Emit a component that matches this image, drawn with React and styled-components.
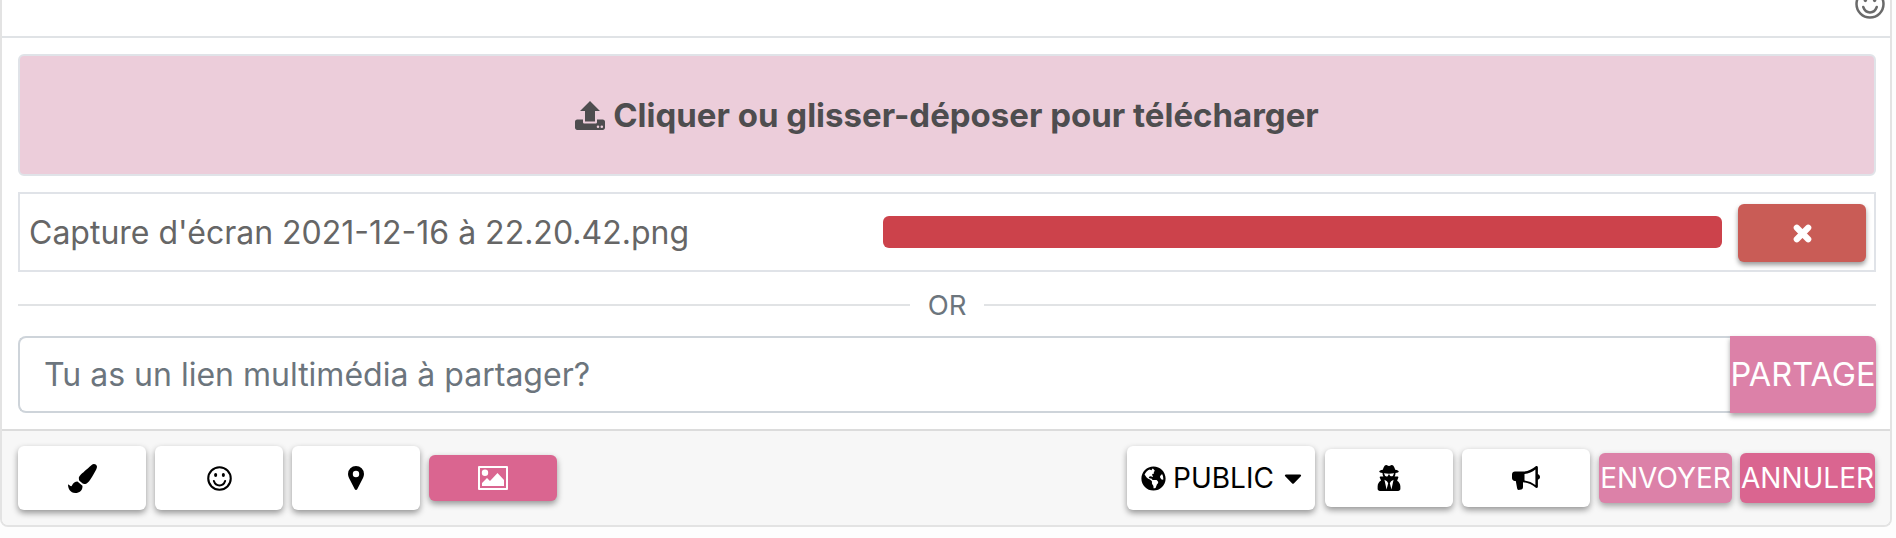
import React from "react";
import styled, { createGlobalStyle } from "styled-components";
import { FaPaintBrush, FaGlobeAmericas, FaCaretDown, FaUserSecret } from "react-icons/fa";

const Global = createGlobalStyle`
  html, body { margin: 0; padding: 0; background: #fdfdfd; }
  body { font-family: Inter, "Noto Sans", sans-serif; overflow: hidden; }
  * { box-sizing: border-box; }
`;

const SmileIcon = ({ size = 25 }) => (
  <svg width={size} height={size} viewBox="0 0 24 24" fill="none" stroke="currentColor" strokeWidth="2">
    <circle cx="12" cy="12" r="10.8" />
    <path d="M6.6 14.4c1 2.9 3 4.3 5.4 4.3s4.400-1.400 5.400-4.300" strokeLinecap="round" />
    <ellipse cx="8.300" cy="8.600" rx="1.500" ry="1.900" fill="currentColor" stroke="none" />
    <ellipse cx="15.700" cy="8.600" rx="1.500" ry="1.900" fill="currentColor" stroke="none" />
  </svg>
);

const PinIcon = () => (
  <svg width="16" height="24" viewBox="0 0 16 24">
    <path
      fillRule="evenodd"
      fill="currentColor"
      d="M8 0a8 8 0 0 1 8 8c0 1.500-.4 2.600-1 3.900L9.200 23.200a1.300 1.300 0 0 1-2.400 0L1 11.900C.4 10.600 0 9.500 0 8a8 8 0 0 1 8-8zm0 4.800a3.200 3.200 0 1 0 0 6.400 3.200 3.200 0 0 0 0-6.400z"
    />
  </svg>
);

const PictureIcon = () => (
  <svg width="30" height="24" viewBox="0 0 30 24">
    <path
      fillRule="evenodd"
      fill="currentColor"
      d="M1 0h28a1 1 0 0 1 1 1v22a1 1 0 0 1-1 1H1a1 1 0 0 1-1-1V1a1 1 0 0 1 1-1zm1 2v20h26V2H2zm5 1.500a3.200 3.200 0 1 1 0 6.400 3.200 3.200 0 0 1 0-6.400zM4 20v-3l5-5 3 3 7.500-8 6.500 7v6H4z"
    />
  </svg>
);

const UploadIcon = () => (
  <svg width="30" height="29" viewBox="0 0 30 29">
    <path
      fillRule="evenodd"
      fill="currentColor"
      d="M15 0l10 10h-5v10.500H10V10H5L15 0zM2.200 18.500h5.800v2.700c0 .8.700 1.300 1.500 1.300h11c.8 0 1.500-.5 1.500-1.300v-2.700h5.800c1.200 0 2.200 1 2.200 2.200v6.100c0 1.200-1 2.200-2.200 2.200H2.200C1 29 0 28 0 26.800v-6.100c0-1.200 1-2.200 2.200-2.200zm20.800 6a1.300 1.300 0 1 0 0 2.600 1.300 1.300 0 0 0 0-2.600zm3.800 0a1.300 1.300 0 1 0 0 2.600 1.300 1.300 0 0 0 0-2.600z"
    />
  </svg>
);

const CrossIcon = () => (
  <svg width="19" height="19" viewBox="0 0 19 19">
    <path d="M3.800 3.800l11.400 11.400M15.200 3.800L3.800 15.200" stroke="currentColor" strokeWidth="6.200" strokeLinecap="round" fill="none" />
  </svg>
);

const HornIcon = () => (
  <svg width="28" height="24" viewBox="0 0 28 24">
    <path
      fillRule="evenodd"
      fill="currentColor"
      d="M24.500 0c.9 0 1.400.7 1.400 1.500v6.800c1.200.3 2.100 1.400 2.100 2.700s-.9 2.400-2.100 2.700v6.800c0 .8-.5 1.500-1.400 1.500-.4 0-.7-.1-1-.4-3.600-3.100-7.400-5-12.500-5.400v4.100c.1 2-.7 2.900-1.700 3.300l-2.700.4c-.9 0-1.300-.9-1.500-1.700L3.800 15H2.900C1.300 15 0 13.600 0 12V8.500C0 6.800 1.300 5.500 2.900 5.500h7.500c5.300 0 9.600-2.200 13.100-5.100.3-.3.600-.4 1-.4zm-1.100 3.400c-3.100 2.400-6.700 4-10.900 4.600v6.500c4.200.6 7.800 2.200 10.900 4.600V3.400z"
    />
  </svg>
);

const Card = styled.div`
  width: 1892px;
  height: 527px;
  display: flex;
  flex-direction: column;
  border: 2px solid #e3e3e3;
  border-top: 0;
  border-radius: 0 0 8px 8px;
  overflow: hidden;
  background: #fff;
`;

const EditorTail = styled.div`
  height: 38px;
  flex: none;
  display: flex;
  justify-content: flex-end;
  align-items: flex-end;
  padding: 0 5px 17px 0;
  border-bottom: 2px solid #e0e3e6;
  color: #6a6a6a;
  overflow: hidden;
  svg { flex: none; }
`;

const Body = styled.div`
  flex: none;
  display: flex;
  flex-direction: column;
  padding: 16px 14px 16px 16px;
`;

const DropZone = styled.div`
  height: 122px;
  flex: none;
  display: flex;
  justify-content: center;
  align-items: center;
  gap: 8px;
  background: #eccdda;
  border: 2px solid #e0e3e8;
  border-radius: 6px;
  color: #4e4d4f;
  font-size: 33px;
  font-weight: 700;
`;

const FileRow = styled.div`
  height: 80px;
  flex: none;
  margin-top: 16px;
  display: flex;
  align-items: center;
  padding: 0 8px 0 9px;
  border: 2px solid #e0e3e8;
`;

const FileName = styled.span`
  width: 854px;
  flex: none;
  color: #666;
  font-size: 32px;
  white-space: nowrap;
`;

const ProgressBar = styled.div`
  flex: 1;
  height: 32px;
  background: #cc424b;
  border-radius: 6px;
`;

const RemoveButton = styled.button`
  width: 128px;
  height: 58px;
  flex: none;
  margin: 2px 0 0 16px;
  display: flex;
  justify-content: center;
  align-items: center;
  padding: 0;
  background: #c95c56;
  color: #fff;
  border: 0;
  border-radius: 6px;
  box-shadow: 0 3px 5px rgba(0, 0, 0, 0.4);
`;

const Separator = styled.div`
  margin-top: 18px;
  display: flex;
  align-items: center;
  gap: 18px;
  color: #6c757d;
  font-size: 27.5px;
  line-height: 30px;
  &::before, &::after {
    content: "";
    flex: 1;
    height: 2px;
    background: #e1e3e5;
  }
`;

const LinkGroup = styled.div`
  height: 77px;
  margin-top: 16px;
  display: flex;
`;

const LinkInput = styled.div`
  flex: 1;
  display: flex;
  align-items: center;
  padding-left: 24px;
  border: 2px solid #ced4da;
  border-right: 0;
  border-radius: 8px 0 0 8px;
  color: #6c757d;
  font-size: 32px;
  white-space: nowrap;
`;

const ShareButton = styled.button`
  width: 146px;
  flex: none;
  padding: 0;
  background: #dc81a8;
  color: #fff;
  border: 0;
  border-radius: 0 8px 8px 0;
  font: 400 32.500px Inter, sans-serif;
  white-space: nowrap;
  box-shadow: 0 3px 5px rgba(0, 0, 0, 0.35);
`;

const Footer = styled.div`
  height: 96px;
  flex: none;
  display: flex;
  justify-content: space-between;
  align-items: center;
  padding: 0 15px 0 16px;
  background: #f7f7f7;
  border-top: 2px solid #dcdcdc;
`;

const Group = styled.div`
  display: flex;
  align-items: center;
  gap: 9px;
`;

const IconButton = styled.button`
  width: 128px;
  height: ${(p) => p.$h || 64}px;
  flex: none;
  display: flex;
  justify-content: center;
  align-items: center;
  padding: 0;
  background: ${(p) => p.$bg || "#fff"};
  color: ${(p) => (p.$bg ? "#fff" : "#000")};
  border: 0;
  border-radius: 6px;
  box-shadow: 0 3px 6px rgba(0, 0, 0, 0.4);
`;

const PrivacyButton = styled.button`
  width: 188px;
  height: 64px;
  flex: none;
  margin-right: 1px;
  display: flex;
  justify-content: center;
  align-items: center;
  gap: 7px;
  padding: 0;
  background: #fff;
  color: #000;
  border: 0;
  border-radius: 6px;
  font: 400 28px Inter, sans-serif;
  box-shadow: 0 3px 6px rgba(0, 0, 0, 0.4);
`;

const Caret = styled(FaCaretDown)`
  margin: 0 -6px 0 -2px;
`;

const TextButton = styled.button`
  width: ${(p) => p.$w}px;
  height: 50px;
  flex: none;
  margin-left: ${(p) => p.$ml || 0}px;
  padding: 0;
  background: ${(p) => p.$bg};
  color: #fff;
  border: 0;
  border-radius: 6px;
  font: 400 28px Inter, sans-serif;
  white-space: nowrap;
  box-shadow: 0 3px 6px rgba(0, 0, 0, 0.35);
`;

export default function App() {
  return (
    <>
      <Global />
      <Card>
        <EditorTail>
          <SmileIcon size={30} />
        </EditorTail>
        <Body>
          <DropZone>
            <UploadIcon />
            <span>Cliquer ou glisser-déposer pour télécharger</span>
          </DropZone>
          <FileRow>
            <FileName>Capture d'écran 2021-12-16 à 22.20.42.png</FileName>
            <ProgressBar />
            <RemoveButton aria-label="Supprimer"><CrossIcon /></RemoveButton>
          </FileRow>
          <Separator>OR</Separator>
          <LinkGroup>
            <LinkInput>Tu as un lien multimédia à partager?</LinkInput>
            <ShareButton>PARTAGE</ShareButton>
          </LinkGroup>
        </Body>
        <Footer>
          <Group>
            <IconButton aria-label="Style"><FaPaintBrush size={29} /></IconButton>
            <IconButton aria-label="Emoji"><SmileIcon /></IconButton>
            <IconButton aria-label="Lieu"><PinIcon /></IconButton>
            <IconButton aria-label="Image" $h={46} $bg="#da6590"><PictureIcon /></IconButton>
          </Group>
          <Group>
            <PrivacyButton>
              <FaGlobeAmericas size={25} />
              <span>PUBLIC</span>
              <Caret size={28} />
            </PrivacyButton>
            <IconButton aria-label="Anonyme" $h={58}><FaUserSecret size={26} /></IconButton>
            <IconButton aria-label="Annonce" $h={58}><HornIcon /></IconButton>
            <TextButton $w={133} $bg="#dc81a8">ENVOYER</TextButton>
            <TextButton $w={135} $ml={-1} $bg="#da6590">ANNULER</TextButton>
          </Group>
        </Footer>
      </Card>
    </>
  );
}
